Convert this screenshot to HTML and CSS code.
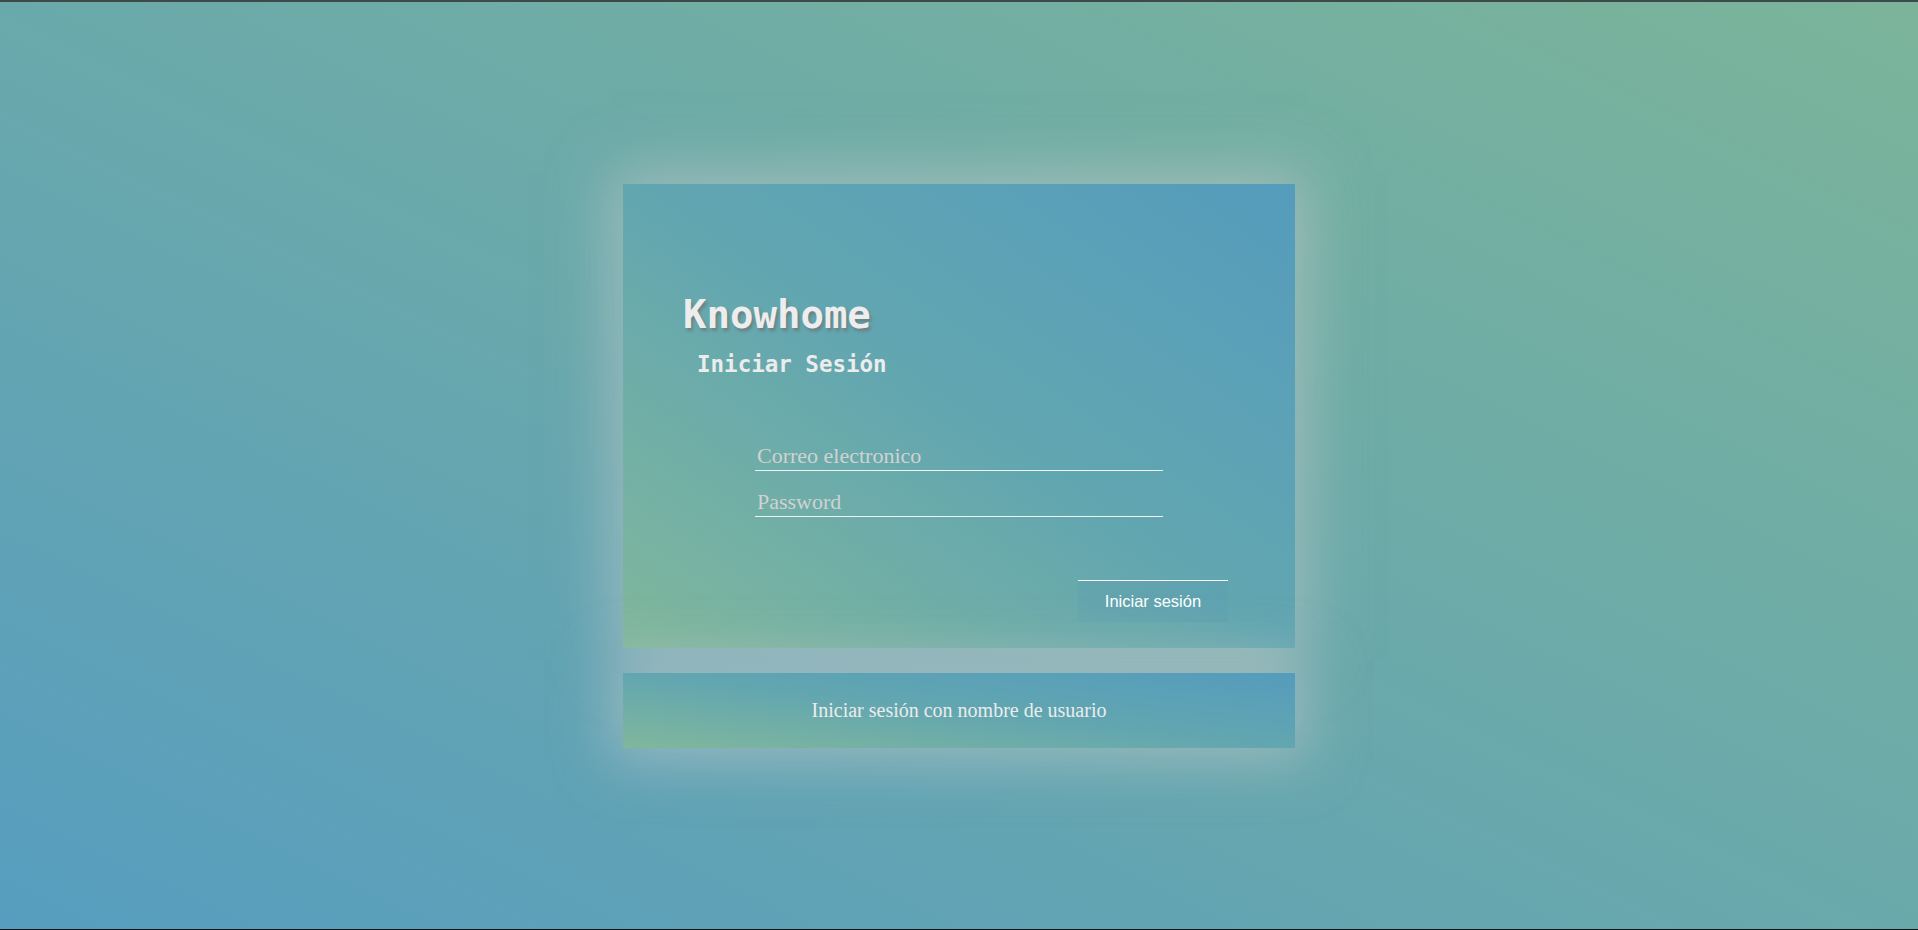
FILE: index.html
```html
<!DOCTYPE html>
<html lang="es">
<head>
<meta charset="utf-8">
<title>Knowhome - Iniciar Sesión</title>
<link rel="stylesheet" href="styles.css">
</head>
<body>
<main class="page">
  <section class="card">
    <h1 class="brand">Knowhome</h1>
    <h2 class="subtitle">Iniciar Sesión</h2>
    <form class="form">
      <input class="field" type="email" placeholder="Correo electronico">
      <input class="field" type="password" placeholder="Password">
    </form>
    <div class="actions">
      <button class="btn" type="button">Iniciar sesión</button>
    </div>
  </section>
  <section class="alt">
    <span class="alt-text">Iniciar sesión con nombre de usuario</span>
  </section>
</main>
</body>
</html>
```
FILE: styles.css
```css
* { box-sizing: border-box; }
html, body { margin: 0; padding: 0; }
body {
  height: 930px;
  border-top: 2px solid #3e4a49;
  border-bottom: 1px solid #121515;
  background: linear-gradient(to top right, #579dbf 0%, #6aa9ab 50%, #7bb49a 100%);
  overflow: hidden;
}
.page {
  height: 100%;
  display: flex;
  flex-direction: column;
  align-items: center;
  justify-content: center;
  gap: 25px;
  padding-top: 1px;
}
.card, .alt {
  width: 672px;
  background: linear-gradient(to top right, #80b79c 0%, #62a6b0 50%, #559cbd 100%);
  box-shadow: 0 0 55px 12px rgba(205, 205, 205, 0.5);
}
.card {
  height: 464px;
  padding: 109px 67px 26px 60px;
  display: flex;
  flex-direction: column;
}
.brand {
  margin: 0;
  font-family: "DejaVu Sans Mono", monospace;
  font-weight: bold;
  font-size: 39px;
  line-height: 44px;
  color: #ededed;
  text-shadow: 2px 3px 3px rgba(110, 110, 110, 0.65);
}
.subtitle {
  margin: 14px 0 0 14px;
  font-family: "DejaVu Sans Mono", monospace;
  font-weight: bold;
  font-size: 22.5px;
  line-height: 26px;
  color: #ececec;
}
.form {
  margin: 64px 0 0 72px;
  width: 408px;
  display: flex;
  flex-direction: column;
  gap: 16px;
}
.field {
  display: block;
  width: 408px;
  height: 30px;
  margin: 0;
  padding: 0 2px;
  border: 0;
  border-bottom: 1px solid #eef4f4;
  background: transparent;
  font-family: "Liberation Serif", "Times New Roman", serif;
  font-size: 22px;
  color: #f0f0f0;
  outline: none;
}
.field::placeholder { color: #d2d2d2; opacity: 1; }
.actions {
  margin-top: 63px;
  display: flex;
  justify-content: flex-end;
}
.btn {
  width: 150px;
  height: 42px;
  margin: 0;
  padding: 0;
  border: 0;
  border-top: 1px solid #ffffff;
  background: rgba(85, 150, 185, 0.18);
  font-family: "Liberation Sans", Arial, sans-serif;
  font-size: 16.5px;
  color: #ffffff;
}
.alt {
  height: 75px;
  display: flex;
  align-items: center;
  justify-content: center;
}
.alt-text {
  font-family: "Liberation Serif", "Times New Roman", serif;
  font-size: 20px;
  color: #ececec;
}
```
